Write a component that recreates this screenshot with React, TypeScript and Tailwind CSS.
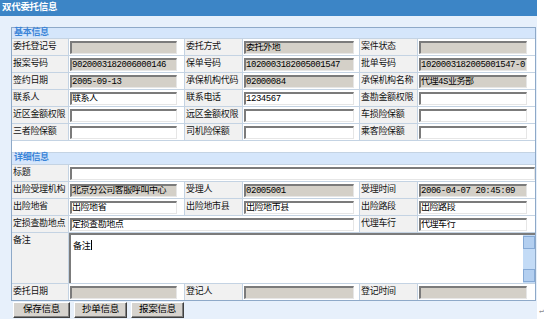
const FONT = "font-['Liberation_Mono','Noto_Sans_CJK_SC',monospace]";

const Input = ({ v = "", ro = false, w }: { v?: string; ro?: boolean; w: string }) => (
  <div
    className={`${w} h-[13px] overflow-hidden whitespace-nowrap border-t-2 border-l-2 border-r border-b border-t-[#7b7b7b] border-l-[#7b7b7b] border-r-[#e6e6e6] border-b-[#e6e6e6] text-[9px] leading-[11px] tracking-[-0.45px] text-black ${ro ? "bg-[#d4d0c8]" : "bg-white"}`}
  >
    {v}
  </div>
);

const Label = ({ t }: { t: string }) => (
  <div className="h-[16px] overflow-hidden whitespace-nowrap bg-[#f1f1f1] pl-[1px] text-[9px] leading-[16px] text-[#111]">{t}</div>
);

const Cell = ({ children, span = "" }: { children: React.ReactNode; span?: string }) => (
  <div className={`h-[16px] bg-white pt-[2px] pl-[1px] ${span}`}>{children}</div>
);

const Header = ({ t, h }: { t: string; h: string }) => (
  <div className={`col-span-6 ${h} bg-[#d5e6fb] pl-[2px] text-[9px] font-bold leading-[11px] text-[#3a84d8]`}>{t}</div>
);

type Row = [string, string, boolean];

const Triple = ({ row }: { row: Row[] }) => (
  <>
    <Label t={row[0][0]} />
    <Cell>
      <Input v={row[0][1]} ro={row[0][2]} w="w-[107px]" />
    </Cell>
    <Label t={row[1][0]} />
    <Cell>
      <Input v={row[1][1]} ro={row[1][2]} w="w-[110px]" />
    </Cell>
    <Label t={row[2][0]} />
    <Cell>
      <Input v={row[2][1]} ro={row[2][2]} w="w-[108px]" />
    </Cell>
  </>
);

const basic: Row[][] = [
  [["委托登记号", "", true], ["委托方式", "委托外地", true], ["案件状态", "", true]],
  [["报案号码", "9020003182006000146", true], ["保单号码", "1020003182005001547", true], ["批单号码", "1020003182005001547-0", true]],
  [["签约日期", "2005-09-13", true], ["承保机构代码", "02000084", true], ["承保机构名称", "代理4S业务部", true]],
  [["联系人", "联系人", false], ["联系电话", "1234567", false], ["查勘金额权限", "", false]],
  [["近区金额权限", "", false], ["远区金额权限", "", false], ["车损险保额", "", false]],
  [["三者险保额", "", false], ["司机险保额", "", false], ["乘客险保额", "", false]],
];

const Button = ({ t, w }: { t: string; w: string }) => (
  <div className={`${w} h-[16px] border border-t-white border-l-white border-b-[#404040] border-r-[#404040] bg-[#d6d3ce] text-center text-[9.5px] leading-[14px] text-black shadow-[inset_-1px_-1px_0_#808080]`}>
    {t}
  </div>
);

export default function App() {
  return (
    <div className={`flex h-[323px] w-[544px] bg-white tracking-[-0.3px] ${FONT}`}>
      <div className="w-[537px]">
        <div className="h-[16px] bg-[#3c85c6] pl-[2px] text-[9.5px] font-bold leading-[16px] text-white">双代委托信息</div>
        <div className="bg-[#e7f0fb] pt-[11px] pl-[11px] pb-[1px]">
          <div className="grid w-[525px] grid-cols-[56px_115px_57px_116px_57px_117px] gap-px border border-[#8ea9c8] bg-[#c4d3e3]">
            <Header t="基本信息" h="h-[10px]" />
            {basic.map((r, i) => (
              <Triple key={i} row={r} />
            ))}
            <div className="col-span-6 h-[11px] bg-white" />
            <Header t="详细信息" h="h-[11px]" />

            <Label t="标题" />
            <Cell span="col-span-5">
              <Input w="w-[465px]" />
            </Cell>

            <Triple
              row={[
                ["出险受理机构", "北京分公司客服呼叫中心", true],
                ["受理人", "02005001", true],
                ["受理时间", "2006-04-07 20:45:09", true],
              ]}
            />
            <Triple
              row={[
                ["出险地省", "出险地省", false],
                ["出险地市县", "出险地市县", false],
                ["出险路段", "出险路段", false],
              ]}
            />

            <Label t="定损查勘地点" />
            <Cell span="col-span-3">
              <Input v="定损查勘地点" w="w-[284px]" />
            </Cell>
            <Label t="代理车行" />
            <Cell>
              <Input v="代理车行" w="w-[108px]" />
            </Cell>

            <div className="h-[50px] bg-[#f1f1f1] pt-[2px] pl-[1px] text-[9px] leading-[12px] text-[#111]">备注</div>
            <div className="col-span-5 flex h-[50px] border-t-2 border-l-2 border-t-[#7b7b7b] border-l-[#7b7b7b] bg-white">
              <div className="flex-1 pt-[4px] pl-[2px] text-[9px] leading-[11px] text-black">
                备注<span className="ml-[1px] inline-block h-[10px] w-px translate-y-[1px] bg-black" />
              </div>
              <div className="flex w-[12px] flex-col justify-between bg-[#c3dbf6] pt-[1px] pb-[1px]">
                <div className="h-[13px] border border-[#86aad6] bg-[#b3cff0]" />
                <div className="h-[13px] border border-[#86aad6] bg-[#b3cff0]" />
              </div>
            </div>

            <Triple
              row={[
                ["委托日期", "", true],
                ["登记人", "", true],
                ["登记时间", "", true],
              ]}
            />
          </div>
          <div className="mt-[1px] flex gap-[4px] pl-[2px]">
            <Button t="保存信息" w="w-[57px]" />
            <Button t="抄单信息" w="w-[53px]" />
            <Button t="报案信息" w="w-[53px]" />
          </div>
        </div>
      </div>
      <div className="flex items-end pb-[6px] pl-[2px] text-[8px] text-[#8c8c8c]">↵</div>
    </div>
  );
}
